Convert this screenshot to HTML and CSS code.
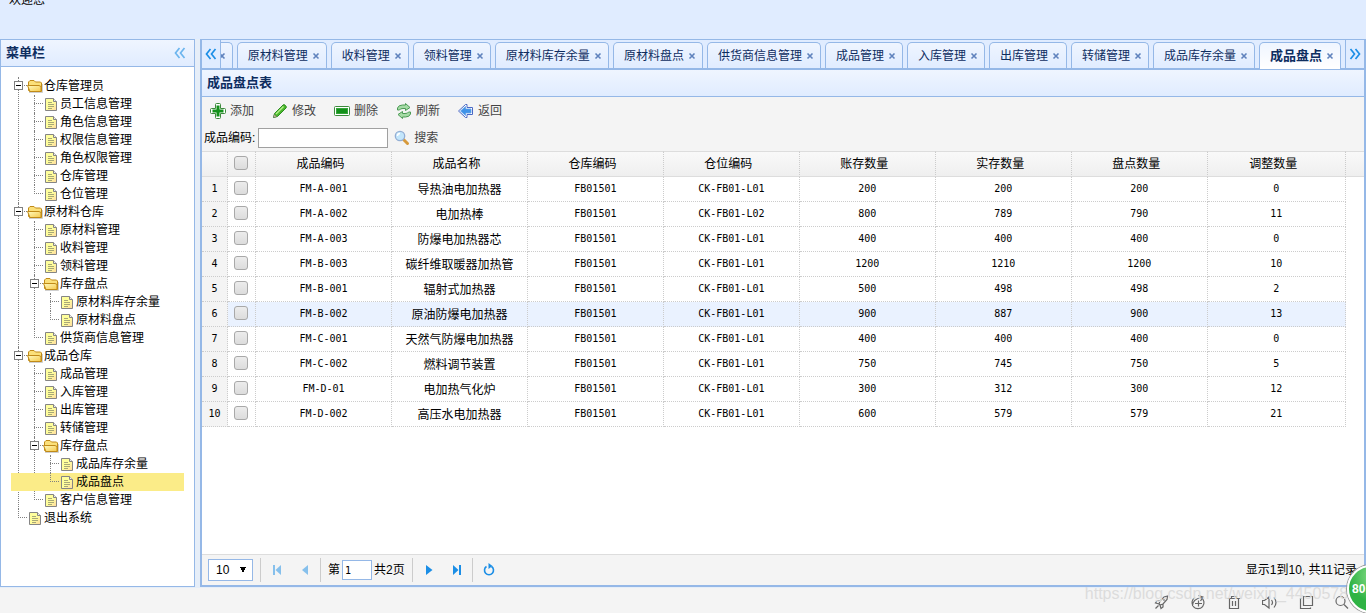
FILE: index.html
```html
<!DOCTYPE html>
<html lang="zh-CN">
<head>
<meta charset="utf-8">
<title>成品盘点</title>
<link rel="stylesheet" href="styles.css">
</head>
<body>
<svg class="defs" aria-hidden="true">
  <defs>
    <linearGradient id="gFolder" x1="0" y1="0" x2="1" y2="1"><stop offset="0" stop-color="#fffbc0"/><stop offset="1" stop-color="#f5c84a"/></linearGradient>
    <linearGradient id="gFile" x1="0" y1="0" x2="1" y2="1"><stop offset="0.5" stop-color="#ffff9c"/><stop offset="1" stop-color="#ffd9a0"/></linearGradient>
    <symbol id="folder" viewBox="0 0 16 16">
      <path d="M2 14.5h13.500V6" fill="none" stroke="#bbb" stroke-opacity=".7"/>
      <path d="M1.500 12.500V4L3 2.500h4L8.500 4h5l1 1v8.500h-12z" fill="#fbe07a" stroke="#c08a18"/>
      <path d="M.500 7.500h11.500l2 1v5H3z" fill="url(#gFolder)" stroke="#c08a18"/>
    </symbol>
    <symbol id="file" viewBox="0 0 16 16">
      <path d="M2.500 2.500h8l3 3v9h-11z" fill="url(#gFile)" stroke="#858585"/>
      <path d="M10.500 2.500v3h3" fill="#eee" stroke="#858585"/>
      <path d="M5 6.500h4M5 8.500h6M5 10.500h6M5 12.500h4" stroke="#a8a878"/>
    </symbol>
    <symbol id="x" viewBox="0 0 8 8"><path d="M1.500 1.500l5 5M6.500 1.500l-5 5" stroke="#5f82bd" stroke-width="1.600"/></symbol>
  </defs>
</svg>

<header class="top">欢迎您</header>

<main class="layout">
  <aside class="west">
    <div class="head"><h2>菜单栏</h2>
      <button class="collapse" aria-label="收起"><svg width="12" height="12" viewBox="0 0 12 12"><path d="M5.500 1L1.500 6l4 5M10.500 1l-4 5 4 5" fill="none" stroke="#6cb5ee" stroke-width="1.700"/></svg></button>
    </div>
    <ul class="tree">
      <li><div class="node"><button class="hit" aria-label="折叠"></button><svg class="ico"><use href="#folder"/></svg><a href="#">仓库管理员</a></div>
        <ul>
          <li><div class="node"><svg class="ico"><use href="#file"/></svg><a href="#">员工信息管理</a></div></li>
          <li><div class="node"><svg class="ico"><use href="#file"/></svg><a href="#">角色信息管理</a></div></li>
          <li><div class="node"><svg class="ico"><use href="#file"/></svg><a href="#">权限信息管理</a></div></li>
          <li><div class="node"><svg class="ico"><use href="#file"/></svg><a href="#">角色权限管理</a></div></li>
          <li><div class="node"><svg class="ico"><use href="#file"/></svg><a href="#">仓库管理</a></div></li>
          <li><div class="node"><svg class="ico"><use href="#file"/></svg><a href="#">仓位管理</a></div></li>
        </ul>
      </li>
      <li><div class="node"><button class="hit" aria-label="折叠"></button><svg class="ico"><use href="#folder"/></svg><a href="#">原材料仓库</a></div>
        <ul>
          <li><div class="node"><svg class="ico"><use href="#file"/></svg><a href="#">原材料管理</a></div></li>
          <li><div class="node"><svg class="ico"><use href="#file"/></svg><a href="#">收料管理</a></div></li>
          <li><div class="node"><svg class="ico"><use href="#file"/></svg><a href="#">领料管理</a></div></li>
          <li><div class="node"><button class="hit" aria-label="折叠"></button><svg class="ico"><use href="#folder"/></svg><a href="#">库存盘点</a></div>
            <ul>
              <li><div class="node"><svg class="ico"><use href="#file"/></svg><a href="#">原材料库存余量</a></div></li>
              <li><div class="node"><svg class="ico"><use href="#file"/></svg><a href="#">原材料盘点</a></div></li>
            </ul>
          </li>
          <li><div class="node"><svg class="ico"><use href="#file"/></svg><a href="#">供货商信息管理</a></div></li>
        </ul>
      </li>
      <li><div class="node"><button class="hit" aria-label="折叠"></button><svg class="ico"><use href="#folder"/></svg><a href="#">成品仓库</a></div>
        <ul>
          <li><div class="node"><svg class="ico"><use href="#file"/></svg><a href="#">成品管理</a></div></li>
          <li><div class="node"><svg class="ico"><use href="#file"/></svg><a href="#">入库管理</a></div></li>
          <li><div class="node"><svg class="ico"><use href="#file"/></svg><a href="#">出库管理</a></div></li>
          <li><div class="node"><svg class="ico"><use href="#file"/></svg><a href="#">转储管理</a></div></li>
          <li><div class="node"><button class="hit" aria-label="折叠"></button><svg class="ico"><use href="#folder"/></svg><a href="#">库存盘点</a></div>
            <ul>
              <li><div class="node"><svg class="ico"><use href="#file"/></svg><a href="#">成品库存余量</a></div></li>
              <li><div class="node selected"><svg class="ico"><use href="#file"/></svg><a href="#">成品盘点</a></div></li>
            </ul>
          </li>
          <li><div class="node"><svg class="ico"><use href="#file"/></svg><a href="#">客户信息管理</a></div></li>
        </ul>
      </li>
      <li><div class="node"><svg class="ico"><use href="#file"/></svg><a href="#">退出系统</a></div></li>
    </ul>
  </aside>

  <section class="center">
    <nav class="tabbar">
      <button class="scroll left" aria-label="向左"><svg width="12" height="12" viewBox="0 0 12 12"><path d="M5.500 1L1.500 6l4 5M10.500 1l-4 5 4 5" fill="none" stroke="#1b8ee6" stroke-width="1.700"/></svg></button>
      <div class="tabs">
        <div class="tab"><button class="close" aria-label="关闭"><svg><use href="#x"/></svg></button></div>
        <div class="tab"><a href="#">原材料管理</a><button class="close" aria-label="关闭"><svg><use href="#x"/></svg></button></div>
        <div class="tab"><a href="#">收料管理</a><button class="close" aria-label="关闭"><svg><use href="#x"/></svg></button></div>
        <div class="tab"><a href="#">领料管理</a><button class="close" aria-label="关闭"><svg><use href="#x"/></svg></button></div>
        <div class="tab"><a href="#">原材料库存余量</a><button class="close" aria-label="关闭"><svg><use href="#x"/></svg></button></div>
        <div class="tab"><a href="#">原材料盘点</a><button class="close" aria-label="关闭"><svg><use href="#x"/></svg></button></div>
        <div class="tab"><a href="#">供货商信息管理</a><button class="close" aria-label="关闭"><svg><use href="#x"/></svg></button></div>
        <div class="tab"><a href="#">成品管理</a><button class="close" aria-label="关闭"><svg><use href="#x"/></svg></button></div>
        <div class="tab"><a href="#">入库管理</a><button class="close" aria-label="关闭"><svg><use href="#x"/></svg></button></div>
        <div class="tab"><a href="#">出库管理</a><button class="close" aria-label="关闭"><svg><use href="#x"/></svg></button></div>
        <div class="tab"><a href="#">转储管理</a><button class="close" aria-label="关闭"><svg><use href="#x"/></svg></button></div>
        <div class="tab"><a href="#">成品库存余量</a><button class="close" aria-label="关闭"><svg><use href="#x"/></svg></button></div>
        <div class="tab active"><a href="#">成品盘点</a><button class="close" aria-label="关闭"><svg><use href="#x"/></svg></button></div>
      </div>
      <button class="scroll right" aria-label="向右"><svg width="12" height="12" viewBox="0 0 12 12"><path d="M1.500 1l4 5-4 5M6.500 1l4 5-4 5" fill="none" stroke="#1b8ee6" stroke-width="1.700"/></svg></button>
    </nav>

    <div class="head"><h2>成品盘点表</h2></div>

    <div class="toolbar">
      <div class="buttons">
        <button class="tool"><svg class="ico" viewBox="0 0 16 16"><path d="M5.500 1.500q0-1 1-1h3q1 0 1 1v4h4q1 0 1 1v3q0 1-1 1h-4v4q0 1-1 1h-3q-1 0-1-1v-4h-4q-1 0-1-1v-3q0-1 1-1h4z" fill="#fff" stroke="#3c8a3c"/><path d="M8 2.500v11M2.500 8h11" stroke="#13911a" stroke-width="3"/></svg>添加</button>
        <button class="tool"><svg class="ico" viewBox="0 0 16 16"><path d="M1.500 14.500l1-4 8.500-8.500q1-1 2.500.500t.500 2.500L5.500 13.500z" fill="#49b82b" stroke="#2c8a22"/><path d="M4 11l7.500-7.500" stroke="#b5ee8c" stroke-width="1.500"/><path d="M1.500 14.500l1-3 2 2z" fill="#f2dcae" stroke="#666" stroke-width=".6"/></svg>修改</button>
        <button class="tool"><svg class="ico" viewBox="0 0 16 16"><rect x=".5" y="3.500" width="15" height="9" rx="1" fill="#fff" stroke="#3c8a3c"/><rect x="2.500" y="5.500" width="11" height="5" fill="#13911a" stroke="#35a53a"/></svg>删除</button>
        <button class="tool"><svg class="ico" viewBox="0 0 16 16"><path d="M1.500 7V5q1-3 5-3h3V.500l4.500 4-4.500 3V5.500H7Q4 5.500 3.500 7z" fill="#a5dba5" stroke="#4c9a55"/><path d="M14.500 9v2q-1 3-5 3h-3v1.500l-4.500-4 4.500-3v2H9q3 0 3.500-1.500z" fill="#a5dba5" stroke="#4c9a55"/></svg>刷新</button>
        <button class="tool"><svg class="ico" viewBox="0 0 16 16"><path d="M.500 8L7.500 1.500H9V4.500h5.500v7H9v3H7.500z" fill="#fff" stroke="#4a68c4" stroke-linejoin="round"/><path d="M2.500 8L7.500 3.500V6H13v4H7.500v2.500z" fill="#3f93e8" stroke="#5f9fe8" stroke-width=".8"/></svg>返回</button>
      </div>
      <div class="search">
        <label for="code">成品编码:</label><input id="code" type="text">
        <button class="tool"><svg class="ico" viewBox="0 0 16 16"><path d="M9.500 9.500l4 4" stroke="#d79a3c" stroke-width="3" stroke-linecap="round"/><circle cx="6" cy="6" r="4.700" fill="#c3e6fb" stroke="#93aed4" stroke-width="1.300"/><path d="M3.500 6q0-2.500 2.500-2.500" fill="none" stroke="#fff" stroke-width="1.400"/></svg>搜索</button>
      </div>
    </div>

    <div class="gridview">
      <table class="grid">
        <colgroup><col class="c-num"><col class="c-check"><col class="c-data"><col class="c-data"><col class="c-data"><col class="c-data"><col class="c-data"><col class="c-data"><col class="c-data"><col><col class="c-fill"></colgroup>
        <thead>
          <tr><th></th><th><input type="checkbox" aria-label="全选"></th><th>成品编码</th><th>成品名称</th><th>仓库编码</th><th>仓位编码</th><th>账存数量</th><th>实存数量</th><th>盘点数量</th><th>调整数量</th><th></th></tr>
        </thead>
        <tbody>
          <tr><td>1</td><td><input type="checkbox" aria-label="选择1"></td><td>FM-A-001</td><td class="zh">导热油电加热器</td><td>FB01501</td><td>CK-FB01-L01</td><td>200</td><td>200</td><td>200</td><td>0</td><td></td></tr>
          <tr><td>2</td><td><input type="checkbox" aria-label="选择2"></td><td>FM-A-002</td><td class="zh">电加热棒</td><td>FB01501</td><td>CK-FB01-L02</td><td>800</td><td>789</td><td>790</td><td>11</td><td></td></tr>
          <tr><td>3</td><td><input type="checkbox" aria-label="选择3"></td><td>FM-A-003</td><td class="zh">防爆电加热器芯</td><td>FB01501</td><td>CK-FB01-L01</td><td>400</td><td>400</td><td>400</td><td>0</td><td></td></tr>
          <tr><td>4</td><td><input type="checkbox" aria-label="选择4"></td><td>FM-B-003</td><td class="zh">碳纤维取暖器加热管</td><td>FB01501</td><td>CK-FB01-L01</td><td>1200</td><td>1210</td><td>1200</td><td>10</td><td></td></tr>
          <tr><td>5</td><td><input type="checkbox" aria-label="选择5"></td><td>FM-B-001</td><td class="zh">辐射式加热器</td><td>FB01501</td><td>CK-FB01-L01</td><td>500</td><td>498</td><td>498</td><td>2</td><td></td></tr>
          <tr class="over"><td>6</td><td><input type="checkbox" aria-label="选择6"></td><td>FM-B-002</td><td class="zh">原油防爆电加热器</td><td>FB01501</td><td>CK-FB01-L01</td><td>900</td><td>887</td><td>900</td><td>13</td><td></td></tr>
          <tr><td>7</td><td><input type="checkbox" aria-label="选择7"></td><td>FM-C-001</td><td class="zh">天然气防爆电加热器</td><td>FB01501</td><td>CK-FB01-L01</td><td>400</td><td>400</td><td>400</td><td>0</td><td></td></tr>
          <tr><td>8</td><td><input type="checkbox" aria-label="选择8"></td><td>FM-C-002</td><td class="zh">燃料调节装置</td><td>FB01501</td><td>CK-FB01-L01</td><td>750</td><td>745</td><td>750</td><td>5</td><td></td></tr>
          <tr><td>9</td><td><input type="checkbox" aria-label="选择9"></td><td>FM-D-01</td><td class="zh">电加热气化炉</td><td>FB01501</td><td>CK-FB01-L01</td><td>300</td><td>312</td><td>300</td><td>12</td><td></td></tr>
          <tr><td>10</td><td><input type="checkbox" aria-label="选择10"></td><td>FM-D-002</td><td class="zh">高压水电加热器</td><td>FB01501</td><td>CK-FB01-L01</td><td>600</td><td>579</td><td>579</td><td>21</td><td></td></tr>
        </tbody>
      </table>
    </div>

    <div class="pager">
      <select aria-label="每页条数"><option>10</option></select>
      <div class="group">
        <button class="pg dim" aria-label="首页"><svg viewBox="0 0 16 16"><path d="M4 3h2v10H4zM12 3v10L6.500 8z"/></svg></button>
        <button class="pg dim" aria-label="上一页"><svg viewBox="0 0 16 16"><path d="M11 3v10L5 8z"/></svg></button>
      </div>
      <div class="group page"><label for="page">第</label><input id="page" type="text" value="1"><span>共2页</span></div>
      <div class="group">
        <button class="pg" aria-label="下一页"><svg viewBox="0 0 16 16"><path d="M5 3v10l6.500-5z"/></svg></button>
        <button class="pg" aria-label="末页"><svg viewBox="0 0 16 16"><path d="M4 3v10l5.500-5zM10 3h2v10h-2z"/></svg></button>
      </div>
      <div class="group">
        <button class="pg" aria-label="刷新"><svg viewBox="0 0 16 16"><path d="M5.500 4.500A4.500 4.500 0 1 0 10.500 4.500" fill="none" stroke="#1b8ee6" stroke-width="1.600"/><path d="M7.500 1l4 3-4 3z"/></svg></button>
      </div>
      <span class="info">显示1到10, 共11记录</span>
    </div>
  </section>
</main>

<footer class="status">
  <span class="watermark">https://blog.csdn.net/weixin_44505789</span>
  <div class="tray">
    <button aria-label="加速"><svg viewBox="0 0 16 16"><path d="M5 10l1-3 4-4 3.500-1L13 5.500l-4 4.500-3 1zM6 7H3l-1.500 2L5 10M9 10v3l-2 1.500-1-3.500M1.500 14.500l3-3M9 6h2"/></svg></button>
    <button aria-label="下载"><svg viewBox="0 0 16 16"><path d="M11 3.500A6 6 0 1 1 5 3.500M2.500 12q0-7 9-8.500M8.500 1.500l4.500 1.500-2.500 4M5 9.500h7M8.500 6.500v6"/></svg></button>
    <button aria-label="清理"><svg viewBox="0 0 16 16"><path d="M1.500 4.500h13M5.500 4V2.500h5V4M3.500 5v9.500h9V5M6.500 7v5M9.500 7v5"/></svg></button>
    <button aria-label="声音"><svg viewBox="0 0 16 16"><path d="M.500 6.500h2L7 3v11l-4.500-3.500h-2zM9.500 6q2 2.500 0 5M12 3.500q4 5 0 10"/></svg></button>
    <button aria-label="窗口"><svg viewBox="0 0 16 16"><path d="M5.500 2.500h9v9h-9zM3.500 4.500h-1v10h10v-1"/></svg></button>
    <button aria-label="缩放"><svg viewBox="0 0 16 16"><circle cx="6.500" cy="7" r="4.500"/><path d="M10 10.500l4 4"/></svg></button>
  </div>
  <div class="ball">80</div>
</footer>
</body>
</html>
```
FILE: styles.css
```css
* { box-sizing: border-box; }

body {
  margin: 0;
  height: 100vh;
  display: flex;
  flex-direction: column;
  overflow: hidden;
  background: #e6eef8;
  font: 12px/18px "Liberation Sans", "Noto Sans CJK SC", sans-serif;
  color: #000;
}

.defs { position: absolute; width: 0; height: 0; }
a { color: inherit; text-decoration: none; }
button { padding: 0; border: 0; background: none; font: inherit; color: inherit; display: flex; align-items: center; }
h2 { margin: 0; font-size: 13px; line-height: 18px; font-weight: bold; color: #0e2d5f; }
ul { margin: 0; padding: 0; list-style: none; }
.ico { width: 16px; height: 16px; flex: none; }

/* The banner is scrolled up: only the foot of its text shows. */
.top {
  flex: none;
  height: 39px;
  padding-left: 9px;
  line-height: 0;
  background: #e0ecff;
  overflow: hidden;
}

.layout { flex: 1; min-height: 0; display: flex; gap: 5px; margin-bottom: 1px; }

.head {
  flex: none;
  height: 27px;
  display: flex;
  align-items: center;
  justify-content: space-between;
  padding: 0 8px 0 5px;
  border-bottom: 1px solid #95b8e7;
  background: linear-gradient(#eff5ff, #e0ecff);
}

.west { flex: none; width: 195px; border: 1px solid #95b8e7; background: #fff; }

.tree { padding: 10px; }
.tree li { position: relative; }
.tree ul { margin-left: 16px; }
.tree li::before {
  content: "";
  position: absolute;
  left: 7px;
  top: 0;
  height: 100%;
  border-left: 1px dotted #808080;
}
.tree li:last-child::before { height: 9px; }
.tree li::after {
  content: "";
  position: absolute;
  left: 7px;
  top: 8px;
  width: 9px;
  border-top: 1px dotted #808080;
}
.node { height: 18px; display: flex; align-items: center; padding-left: 16px; }
.node a { padding-left: 1px; white-space: nowrap; }
.selected { margin-left: -32px; padding-left: 48px; background: #fbec88; }
.hit {
  position: absolute;
  z-index: 1;
  left: 3px;
  top: 4px;
  width: 9px;
  height: 9px;
  border: 1px solid #808080;
  background: linear-gradient(#000, #000) center / 5px 1px no-repeat #fff;
}

.center {
  flex: 1;
  min-width: 0;
  display: flex;
  flex-direction: column;
  border: 2px solid #95b8e7;
  border-top-width: 1px;
  background: #fff;
}

.tabbar { flex: none; display: flex; height: 30px; background: #e0ecff; border-bottom: 2px solid #95b8e7; }
.scroll { flex: none; width: 19px; justify-content: center; }
.left { border-right: 1px solid #95b8e7; }
.right { border-left: 1px solid #95b8e7; }
.tabs {
  flex: 1;
  min-width: 0;
  display: flex;
  justify-content: flex-end;
  gap: 4px;
  padding: 2px 4px 0 0;
  margin-bottom: -1px;
  overflow: hidden;
}
.tab {
  flex: none;
  display: flex;
  align-items: center;
  gap: 4px;
  padding: 0 6px 0 10px;
  margin-bottom: 1px;
  border: 1px solid #95b8e7;
  border-bottom: 0;
  border-radius: 5px 5px 0 0;
  background: linear-gradient(#eff5ff, #e0ecff);
  color: #0e2d5f;
  white-space: nowrap;
}
.active { margin-bottom: 0; background: linear-gradient(#eff5ff, #fff); font-size: 13px; font-weight: bold; }
.close svg { width: 8px; height: 8px; }

.toolbar { flex: none; padding: 0 0 1px 2px; background: #f4f4f4; }
.buttons { display: flex; gap: 18px; padding: 0 6px; height: 28px; }
.tool { gap: 4px; color: #444; }
.search { display: flex; align-items: center; height: 25px; }
.search input {
  width: 130px;
  height: 20px;
  margin: 0 6px 0 3px;
  border: 1px solid #a0a0a0;
  background: #fff;
}

.gridview { flex: 1; min-height: 0; overflow: hidden; }
.grid { width: 100%; table-layout: fixed; border-collapse: separate; border-spacing: 0; }
.c-num { width: 26px; }
.c-check { width: 28px; }
.c-data { width: 11.7%; }
.c-fill { width: 18px; }
.grid th, .grid td { height: 25px; padding: 0; text-align: center; border-right: 1px dotted #ccc; white-space: nowrap; }
.grid th {
  height: 26px;
  padding-right: 6px;
  font-weight: normal;
  border-top: 1px solid #ddd;
  border-bottom: 1px solid #ddd;
  background: linear-gradient(#f9f9f9, #efefef);
}
.grid th:nth-child(2) { padding-right: 0; }
.grid td { border-bottom: 1px dotted #ccc; font: 10px/18px "DejaVu Sans Mono", monospace; }
.grid td.zh { font: 12px/18px "Noto Sans CJK SC", sans-serif; }
.over td { background: #eaf2ff; }
.over td:last-child { background: #fff; }
.grid td:first-child { background: #f4f4f4; }
.grid th:last-child, .grid td:last-child { border-right: 0; }
.grid td:last-child { border-bottom: 0; }
.grid input {
  appearance: none;
  display: block;
  width: 14px;
  height: 14px;
  margin: 0 auto 2px 6px;
  border: 1px solid #a8a8a8;
  border-radius: 3px;
  background: linear-gradient(#ececec, #dcdcdc);
}

.pager {
  flex: none;
  display: flex;
  align-items: center;
  height: 31px;
  padding: 0 7px 0 6px;
  border-top: 1px solid #ddd;
  background: #f4f4f4;
}
.pager select {
  appearance: none;
  width: 45px;
  height: 22px;
  margin-right: 7px;
  padding: 0 7px;
  border: 1px solid #95b8e7;
  border-radius: 0;
  font: 12px/18px "Liberation Sans", sans-serif;
  color: #000;
  background: #fff;
  background-image: linear-gradient(to bottom right, #000 50%, transparent 50%), linear-gradient(to bottom left, #000 50%, transparent 50%);
  background-size: 3px 6px;
  background-position: 34px 7px, 31px 7px;
  background-repeat: no-repeat;
}
.group { display: flex; align-items: center; height: 24px; border-left: 1px solid #ccc; padding: 0 7px 0 8px; gap: 12px; }
.page { gap: 2px; padding: 0 7px; }
.page input { width: 30px; height: 20px; padding: 0 2px; border: 1px solid #95b8e7; font: 10px/18px "DejaVu Sans Mono", monospace; }
.pg svg { width: 16px; height: 16px; fill: #1b8ee6; }
.dim { opacity: .5; }
.info { margin-left: auto; }

.status {
  position: relative;
  flex: none;
  height: 25px;
  display: flex;
  align-items: center;
  justify-content: flex-end;
  padding-right: 16px;
  background: #f4f4f4;
}
.tray { display: flex; gap: 20px; padding-top: 2px; }
.tray svg { width: 16px; height: 16px; fill: none; stroke: #666; stroke-width: 1.2; }
.watermark {
  position: absolute;
  right: 9px;
  top: -3px;
  font-size: 16px;
  color: #dcdcdc;
}
.ball {
  position: absolute;
  right: -29px;
  bottom: 0;
  width: 48px;
  height: 48px;
  padding-left: 3px;
  border: 2px solid #fff;
  border-radius: 50%;
  background: radial-gradient(circle at 60% 20%, #8fe08f, #2fb344 60%);
  box-shadow: 0 0 0 1px #999;
  color: #fff;
  font: bold 12px/44px "Liberation Sans", sans-serif;
}
```
